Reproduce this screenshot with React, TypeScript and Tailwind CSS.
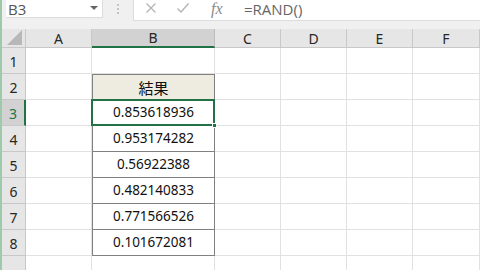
import React from "react";

const FONT = { fontFamily: '"Noto Sans", "Noto Sans CJK JP", sans-serif' };

const cols = ["A", "B", "C", "D", "E", "F"];
const widths = [66, 123, 66, 66, 66, 67];
const values = [
  "",
  "結果",
  "0.853618936",
  "0.953174282",
  "0.56922388",
  "0.482140833",
  "0.771566526",
  "0.101672081",
];

function Cell({ row, col }: { row: number; col: number }) {
  const isB = col === 1;
  const inTable = isB && row >= 2 && row <= 8;
  const w = widths[col];
  let cls =
    "h-full shrink-0 flex items-center justify-center border-r border-b border-[#e1e1e1] text-[13.5px] text-[#111]";
  if (inTable) {
    cls =
      "h-full shrink-0 flex items-center justify-center border-x border-b border-[#808080] text-[13.5px] text-[#111]";
    if (row === 2) cls += " border-t bg-[#eeece1] text-[15px] pt-[2px]";
  }
  return (
    <div className={cls} style={{ width: w }}>
      {isB && row <= 8 ? values[row - 1] : ""}
    </div>
  );
}

export default function App() {
  const rows = [1, 2, 3, 4, 5, 6, 7, 8, 9];
  return (
    <div className="w-[480px] h-[270px] overflow-hidden flex bg-white" style={FONT}>
      <div className="w-[2px] h-full bg-[#9fc9ab] shrink-0" />
      <div className="flex-1 flex flex-col min-w-0">
        {/* formula bar */}
        <div className="h-[29px] bg-[#f0f0f0] flex items-start shrink-0 relative">
          <div className="ml-[4px] w-[97px] h-[18px] bg-white border-r border-b border-[#dcdcdc] flex items-center relative">
            <span className="ml-[2px] text-[15px] text-[#555] leading-[18px]" style={{ fontFamily: '"Open Sans", sans-serif' }}>
              B3
            </span>
            <div className="absolute left-[84px] top-[6px] w-0 h-0 border-l-[4px] border-r-[4px] border-t-[4px] border-l-transparent border-r-transparent border-t-[#666]" />
          </div>
          <div className="w-[30px] h-[18px] flex flex-col items-center justify-center gap-[2px]">
            <div className="w-[2px] h-[2px] bg-[#c4c4c4]" />
            <div className="w-[2px] h-[2px] bg-[#c4c4c4]" />
            <div className="w-[2px] h-[2px] bg-[#c4c4c4]" />
          </div>
          <div className="flex-1 h-[21px] bg-white border-l border-b border-[#dcdcdc] flex items-center relative">
            <svg className="absolute left-[11px] top-[2px]" width="12" height="12" viewBox="0 0 12 12">
              <path d="M1.5 1.5 L10.5 10.5 M10.5 1.5 L1.5 10.5" stroke="#b4b4b4" strokeWidth="1.3" fill="none" />
            </svg>
            <svg className="absolute left-[42px] top-[2px]" width="14" height="12" viewBox="0 0 14 12">
              <path d="M1.5 6.5 L5 10 L12.5 1.5" stroke="#b4b4b4" strokeWidth="1.4" fill="none" />
            </svg>
            <span
              className="absolute left-[77px] top-[0px] italic text-[16px] text-[#8a8a8a] leading-[18px]"
              style={{ fontFamily: '"Liberation Serif", serif' }}
            >
              fx
            </span>
            <span
              className="absolute left-[110px] top-[0px] text-[15px] text-[#666] leading-[18px]"
              style={{ fontFamily: '"Open Sans", sans-serif' }}
            >
              =RAND()
            </span>
          </div>
        </div>
        {/* column headers */}
        <div className="h-[19px] flex shrink-0 bg-[#e6e6e6]">
          <div className="w-[24px] h-full shrink-0 relative border-r border-b border-[#c8c8c8]">
            <svg className="absolute right-[3px] bottom-[2px]" width="15" height="15" viewBox="0 0 15 15">
              <path d="M15 0 L15 15 L0 15 Z" fill="#b8b8b8" />
            </svg>
          </div>
          {cols.map((c, i) => (
            <div
              key={c}
              className={
                i === 1
                  ? "h-full shrink-0 flex items-center justify-center bg-[#d2d2d2] border-r border-[#bdbdbd] border-b-2 border-b-[#217346] text-[14px] text-[#262626]"
                  : "h-full shrink-0 flex items-center justify-center border-r border-b border-[#c8c8c8] text-[14px] text-[#262626]"
              }
              style={{ width: widths[i] }}
            >
              {c}
            </div>
          ))}
        </div>
        {/* rows */}
        <div className="relative flex-1">
          {rows.map((r) => (
            <div key={r} className="h-[26px] flex">
              <div
                className={
                  r === 3
                    ? "w-[24px] h-full shrink-0 bg-[#d2d2d2] border-r-2 border-[#217346] border-b border-b-[#c8c8c8] flex items-end justify-center pb-[1px] text-[14px] text-[#217346]"
                    : "w-[24px] h-full shrink-0 bg-[#e6e6e6] border-r border-b border-[#c8c8c8] flex items-end justify-center pb-[1px] text-[14px] text-[#262626]"
                }
              >
                {r <= 8 ? r : ""}
              </div>
              {cols.map((c, i) => (
                <Cell key={c} row={r} col={i} />
              ))}
            </div>
          ))}
          {/* selection */}
          <div className="absolute left-[89px] top-[51px] w-[124px] h-[27px] border-2 border-[#217346]" />
          <div className="absolute left-[210px] top-[75px] w-[5px] h-[5px] bg-[#217346] border border-white" />
        </div>
      </div>
    </div>
  );
}
